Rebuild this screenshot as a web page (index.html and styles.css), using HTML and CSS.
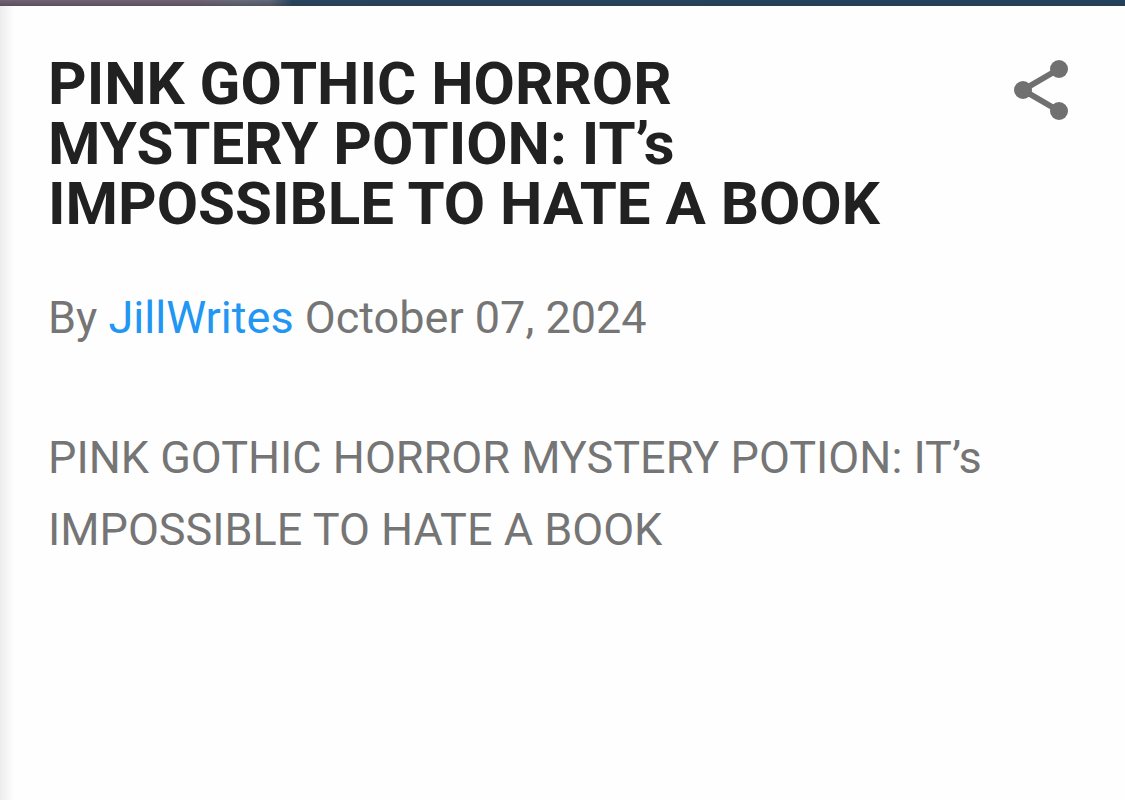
FILE: index.html
```html
<!DOCTYPE html>
<html lang="en">
<head>
    <meta charset="UTF-8">
    <meta name="viewport" content="width=device-width, initial-scale=1.0">
    <title>PINK GOTHIC HORROR MYSTERY POTION</title>
    <link rel="stylesheet" href="styles.css">
</head>
<body>
    <div class="hero"></div>
    <main class="post">
        <header class="post-header">
            <h1 class="post-title">PINK GOTHIC HORROR MYSTERY POTION: IT’s IMPOSSIBLE TO HATE A BOOK</h1>
            <button class="share-button" type="button" aria-label="Share">
                <svg class="share-icon" viewBox="0 0 24 24" aria-hidden="true">
                    <path d="M18 5 6 12l12 7" fill="none" stroke="currentColor" stroke-width="2"/>
                    <circle cx="18" cy="5" r="3"/>
                    <circle cx="6" cy="12" r="3"/>
                    <circle cx="18" cy="19" r="3"/>
                </svg>
            </button>
        </header>
        <p class="byline">By <a href="#">JillWrites</a> <time datetime="2024-10-07">October 07, 2024</time></p>
        <p class="post-body">PINK GOTHIC HORROR MYSTERY POTION: IT’s IMPOSSIBLE TO HATE A BOOK</p>
    </main>
</body>
</html>
```
FILE: styles.css
```css
body {
    margin: 0;
    min-height: 100vh;
    display: flex;
    flex-direction: column;
    font-family: Roboto, sans-serif;
    background-color: #fefefe;
    color: #757575;
}

/* Bottom edge of the cover picture */
.hero {
    height: 6px;
    background:
        linear-gradient(to bottom, transparent, rgba(45, 55, 65, 0.4)),
        linear-gradient(to right, #746273 0%, #746273 17%, #6b6b7a 21%, #636879 24%, #28445f 26%, #22425f 100%);
}

.post {
    flex: 1;
    padding: 48px;
    background: linear-gradient(to right, #ececec, #fefefe 14px);
}

.post-header {
    display: flex;
    justify-content: space-between;
    align-items: flex-start;
    gap: 96px;
}

.post-title {
    margin: 0;
    font-size: 60px;
    line-height: 60px;
    font-weight: 700;
    color: #212121;
}

.share-button {
    flex: none;
    padding: 0;
    border: 0;
    background: none;
    color: #707070;
    cursor: pointer;
}

.share-icon {
    display: block;
    width: 72px;
    height: 72px;
    fill: currentColor;
}

.byline {
    margin: 48px 0 0;
    font-size: 45px;
    line-height: 72px;
}

.byline a {
    color: #2196f3;
    text-decoration: none;
}

.post-body {
    margin: 68px 0 0;
    font-size: 45px;
    line-height: 72px;
}
```
